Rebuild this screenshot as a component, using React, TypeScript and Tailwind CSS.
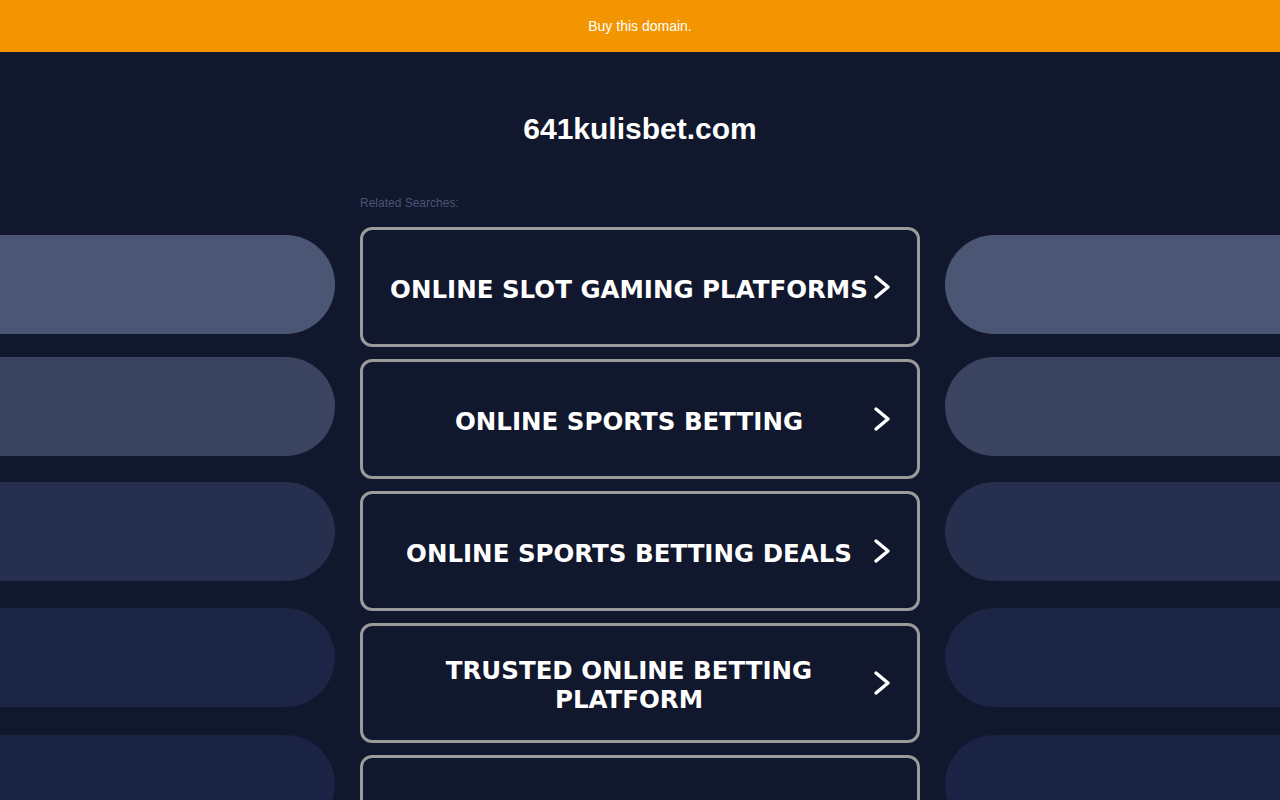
import React from "react";

const searches = [
  "ONLINE SLOT GAMING PLATFORMS",
  "ONLINE SPORTS BETTING",
  "ONLINE SPORTS BETTING DEALS",
  "TRUSTED ONLINE BETTING PLATFORM",
  "",
];

function Chevron() {
  return (
    <svg width="20" height="26" viewBox="0 0 20 26" className="shrink-0">
      <polyline
        points="5,3 17,13 5,23"
        fill="none"
        stroke="white"
        strokeWidth="3.5"
        strokeLinecap="round"
        strokeLinejoin="round"
      />
    </svg>
  );
}

function Pills({ side }: { side: "left" | "right" }) {
  const round = side === "left" ? "rounded-r-full" : "rounded-l-full";
  return (
    <div className="flex-1 flex flex-col pt-[183px]">
      <div className={`h-[99px] bg-[#4b5674] ${round}`} />
      <div className={`h-[99px] mt-[23px] bg-[#3a4461] ${round}`} />
      <div className={`h-[99px] mt-[26px] bg-[#262f4e] ${round}`} />
      <div className={`h-[99px] mt-[27px] bg-[#1c2546] ${round}`} />
      <div className={`h-[99px] mt-[28px] bg-[#1b2445] ${round}`} />
    </div>
  );
}

export default function App() {
  return (
    <div className="min-h-screen bg-[#11172c] font-['Liberation_Sans',Arial,sans-serif] overflow-hidden">
      <div className="h-[52px] bg-[#f39500] flex items-center justify-center text-white text-[14px]">
        Buy this domain.
      </div>
      <div className="flex gap-[25px]">
        <Pills side="left" />
        <main className="w-[560px] shrink-0 pb-10">
          <h1 className="pt-[54px] text-center text-[30px] font-bold leading-[46px] text-white">
            641kulisbet.com
          </h1>
          <p className="mt-[44px] text-[12px] leading-[14px] text-[#4b5577]">
            Related Searches:
          </p>
          <div className="mt-[17px] flex flex-col gap-3">
            {searches.map((s, i) => (
              <a
                key={i}
                href="#"
                className="h-[120px] flex items-center pl-6 pr-[26px] border-[3px] border-[#9a9a9a] rounded-[12px] text-white"
              >
                <span className="flex-1 pt-1 text-center font-['DejaVu_Sans',Verdana,sans-serif] font-bold text-[24.5px] leading-[29px]">
                  {s}
                </span>
                {s && <Chevron />}
              </a>
            ))}
          </div>
        </main>
        <Pills side="right" />
      </div>
    </div>
  );
}
